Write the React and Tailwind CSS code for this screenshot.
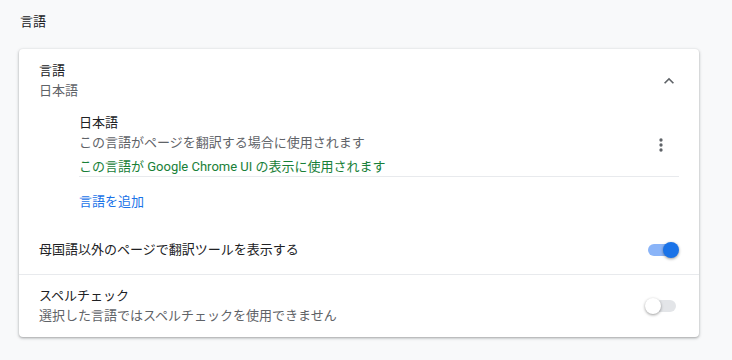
const FONT = { fontFamily: 'Roboto, "Noto Sans CJK JP", sans-serif' };

function Toggle({ on }) {
  return (
    <div className="relative h-[16px] w-[34px] shrink-0">
      <div
        className={`absolute left-[3px] top-[2px] h-[12px] w-[28px] rounded-full ${
          on ? 'bg-[#8ab4f8]' : 'bg-[#e3e5e8]'
        }`}
      />
      <div
        className={`absolute top-0 h-[16px] w-[16px] rounded-full shadow-[0_1px_3px_rgba(0,0,0,0.4)] ${
          on ? 'left-[18px] bg-[#1a73e8]' : 'left-0 bg-white'
        }`}
      />
    </div>
  );
}

function ExpandLess() {
  return (
    <svg width="20" height="20" viewBox="0 0 24 24" fill="#5f6368" aria-hidden="true">
      <path d="M12 8l-6 6 1.41 1.41L12 10.83l4.59 4.58L18 14z" />
    </svg>
  );
}

function MoreVert() {
  return (
    <svg width="20" height="20" viewBox="0 0 24 24" fill="#5f6368" aria-hidden="true">
      <circle cx="12" cy="6" r="2" />
      <circle cx="12" cy="12" r="2" />
      <circle cx="12" cy="18" r="2" />
    </svg>
  );
}

export default function App() {
  return (
    <div
      className="h-[360px] w-[732px] overflow-hidden bg-[#f8f9fa] text-[13px] text-[#202124]"
      style={FONT}
    >
      <div className="pl-[20px] pt-[12px] leading-[20px]">言語</div>

      <div className="ml-[19px] mt-[17px] w-[680px] rounded-[4px] bg-white shadow-[0_1px_2px_0_rgba(60,64,67,0.3),0_1px_3px_1px_rgba(60,64,67,0.15)]">
        {/* Languages header */}
        <div className="flex h-[64px] items-center pl-[20px] pr-[20px]">
          <div className="flex-1 leading-[20px]">
            <div>言語</div>
            <div className="text-[#5f6368]">日本語</div>
          </div>
          <ExpandLess />
        </div>

        {/* Language list */}
        <div className="pl-[60px] pr-[20px]">
          <div className="flex h-[64px] items-center border-b border-[#e8eaed]">
            <div className="flex-1">
              <div className="leading-[20px]">日本語</div>
              <div className="leading-[20px] text-[#5f6368]">
                この言語がページを翻訳する場合に使用されます
              </div>
              <div className="mt-[5px] leading-[18px] text-[#188038]">
                この言語が Google Chrome UI の表示に使用されます
              </div>
            </div>
            <div className="mr-[8px] flex h-[20px] w-[20px] items-center justify-center">
              <MoreVert />
            </div>
          </div>
          <div className="flex h-[49px] items-center text-[#1a73e8]">言語を追加</div>
        </div>

        {/* Translate */}
        <div className="flex h-[49px] items-center border-b border-[#e8eaed] px-[20px]">
          <div className="flex-1 leading-[20px]">母国語以外のページで翻訳ツールを表示する</div>
          <Toggle on />
        </div>

        {/* Spell check */}
        <div className="flex h-[62px] items-center px-[20px]">
          <div className="flex-1 leading-[20px]">
            <div>スペルチェック</div>
            <div className="text-[#5f6368]">選択した言語ではスペルチェックを使用できません</div>
          </div>
          <Toggle on={false} />
        </div>
      </div>
    </div>
  );
}
